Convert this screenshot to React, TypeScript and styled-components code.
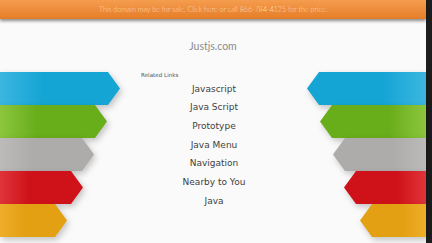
import React from 'react'
import styled, { createGlobalStyle } from 'styled-components'

const GlobalStyle = createGlobalStyle`
  html, body, #root {
    margin: 0;
    padding: 0;
    height: 100%;
  }
  body {
    overflow: hidden;
    background: #fafafa;
  }
`

type Side = 'left' | 'right'

const HEAD = 12

const palette = {
  blue: ['#3cb6e0', '#15a5d5'],
  green: ['#8cc63e', '#68ad1a'],
  gray: ['#bdbbba', '#adacaa'],
  red: ['#e0343a', '#cf1219'],
  orange: ['#eeae2a', '#e3a013'],
}

type Tone = keyof typeof palette

const arrows: { tone: Tone; width: number }[] = [
  { tone: 'blue', width: 120 },
  { tone: 'green', width: 107 },
  { tone: 'gray', width: 94 },
  { tone: 'red', width: 83 },
  { tone: 'orange', width: 67 },
]

const links = [
  'Javascript',
  'Java Script',
  'Prototype',
  'Java Menu',
  'Navigation',
  'Nearby to You',
  'Java',
]

const Shell = styled.div`
  display: flex;
  width: 432px;
  height: 243px;
`

const Page = styled.div`
  flex: 1;
  display: flex;
  flex-direction: column;
  background: #fafafa;
  min-width: 0;
`

// the dark strip along the right edge of the screenshot
const Rail = styled.div`
  width: 6px;
  background: #1d1d1d;
`

const Banner = styled.a`
  position: relative;
  z-index: 1;
  display: flex;
  align-items: center;
  justify-content: center;
  height: 19px;
  background: linear-gradient(to bottom, #f59d4f, #e57d27);
  box-shadow: 0 2px 3px rgba(0, 0, 0, 0.45);
  color: #fcd8b6;
  font-family: Lato, 'Open Sans', sans-serif;
  font-weight: 300;
  font-size: 7.1px;
  text-decoration: none;
  white-space: nowrap;
`

const Title = styled.h1`
  margin: 21px 0 0;
  height: 12px;
  line-height: 12px;
  text-align: center;
  font-family: Lato, 'Open Sans', sans-serif;
  font-weight: 400;
  font-size: 10.5px;
  color: #8c8c8c;
`

const Stage = styled.div`
  display: grid;
  grid-template-columns: 120px 1fr 118px;
  margin-top: 20px;
`

const ArrowStack = styled.div<{ $side: Side }>`
  display: flex;
  flex-direction: column;
  align-items: ${(p) => (p.$side === 'left' ? 'flex-start' : 'flex-end')};
`

const ArrowSlot = styled.div`
  filter: drop-shadow(2px 3px 3px rgba(0, 0, 0, 0.22));
`

const Arrow = styled.div<{ $side: Side; $tone: Tone; $width: number }>`
  width: ${(p) => p.$width}px;
  height: 33px;
  background: linear-gradient(
    ${(p) => (p.$side === 'left' ? 'to right' : 'to left')},
    ${(p) => palette[p.$tone][0]} 0%,
    ${(p) => palette[p.$tone][1]} 35%,
    ${(p) => palette[p.$tone][1]} 100%
  );
  clip-path: ${(p) =>
    p.$side === 'left'
      ? `polygon(0 0, calc(100% - ${HEAD}px) 0, 100% 50%, calc(100% - ${HEAD}px) 100%, 0 100%)`
      : `polygon(${HEAD}px 0, 100% 0, 100% 100%, ${HEAD}px 100%, 0 50%)`};
`

const Links = styled.div`
  display: flex;
  flex-direction: column;
  font-family: 'DejaVu Sans', sans-serif;
`

const LinksHeading = styled.div`
  padding-left: 21px;
  font-size: 5.6px;
  line-height: 6px;
  color: #555;
`

const LinkList = styled.ul`
  list-style: none;
  margin: 1.5px 0 0;
  padding: 0;
`

const LinkItem = styled.li`
  height: 18.7px;
  line-height: 18.7px;
  text-align: center;
  font-size: 9px;
  color: #3f3f3f;
`

function Arrows({ side }: { side: Side }) {
  return (
    <ArrowStack $side={side}>
      {arrows.map((a) => (
        <ArrowSlot key={a.tone}>
          <Arrow $side={side} $tone={a.tone} $width={side === 'left' ? a.width : a.width - 1} />
        </ArrowSlot>
      ))}
    </ArrowStack>
  )
}

export default function App() {
  return (
    <>
      <GlobalStyle />
      <Shell>
        <Page>
          <Banner href="#">
            This domain may be for sale. Click here or call 866-784-4125 for the price.
          </Banner>
          <Title>Justjs.com</Title>
          <Stage>
            <Arrows side="left" />
            <Links>
              <LinksHeading>Related Links</LinksHeading>
              <LinkList>
                {links.map((l) => (
                  <LinkItem key={l}>{l}</LinkItem>
                ))}
              </LinkList>
            </Links>
            <Arrows side="right" />
          </Stage>
        </Page>
        <Rail />
      </Shell>
    </>
  )
}
